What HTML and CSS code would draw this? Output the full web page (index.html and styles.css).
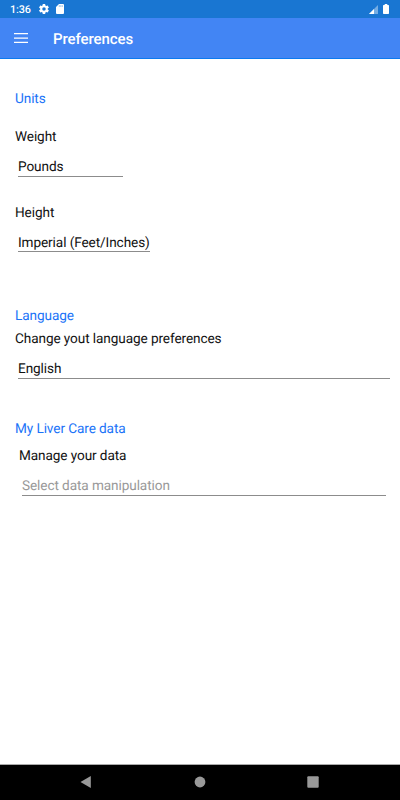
FILE: index.html
```html
<!DOCTYPE html>
<html lang="en">
<head>
<meta charset="utf-8">
<title>Preferences</title>
<link rel="stylesheet" href="styles.css">
</head>
<body>
<div class="status">
  <span class="time">1:36</span>
  <svg class="gear" width="12" height="12" viewBox="2 2 20 20"><path fill="#fff" fill-rule="evenodd" d="M19.4 13a7.500 7.500 0 0 0 0-2l2.100-1.600c.2-.2.200-.4.100-.6l-2-3.500c-.1-.2-.4-.3-.6-.2l-2.500 1a7 7 0 0 0-1.700-1l-.4-2.700a.5.5 0 0 0-.5-.4h-4a.5.5 0 0 0-.5.4L9 5.100a7 7 0 0 0-1.700 1l-2.500-1c-.2-.1-.5 0-.6.2l-2 3.500c-.1.2-.1.400.1.600L4.500 11a7.500 7.500 0 0 0 0 2l-2.200 1.600c-.2.2-.2.400-.1.600l2 3.500c.1.200.4.300.6.200l2.500-1a7 7 0 0 0 1.700 1l.4 2.700c0 .2.200.4.500.4h4c.2 0 .5-.2.500-.4l.4-2.700a7 7 0 0 0 1.700-1l2.500 1c.2.100.5 0 .6-.2l2-3.500c.1-.2.100-.4-.1-.6zM12 15.500a3.500 3.500 0 1 1 0-7 3.500 3.500 0 0 1 0 7z"/></svg>
  <svg class="card" width="8" height="10" viewBox="0 0 8 10"><path fill="#fff" d="M3 0h4a1 1 0 0 1 1 1v8a1 1 0 0 1-1 1H1a1 1 0 0 1-1-1V3z"/><path stroke="#1976d2" stroke-width=".5" d="M3.300 1.300v1.500M4.800 1.300v1.500M6.300 1.300v1.500"/></svg>
  <svg class="signal" width="9" height="9" viewBox="0 0 9 9"><path fill="#75ade4" d="M9 0v9H0z"/><path fill="#fff" d="M5 4v5H0z"/></svg>
  <svg class="battery" width="6" height="10" viewBox="0 0 6 10"><path fill="#fff" d="M1.700 0h2.600v1H5.300q.7 0 .7.700v7.600q0 .7-.7.700H.7q-.7 0-.7-.7V1.700Q0 1 .7 1h1z"/></svg>
</div>
<header class="bar">
  <svg class="menu" width="14" height="10" viewBox="0 0 14 10"><path stroke="#fff" stroke-width="1.300" d="M0 .7h14M0 5.200h14M0 9.300h14"/></svg>
  <h1>Preferences</h1>
</header>
<main>
  <section class="units">
    <h2>Units</h2>
    <p class="label weight">Weight</p>
    <div class="field pounds">Pounds</div>
    <p class="label height">Height</p>
    <div class="field imperial">Imperial (Feet/Inches)</div>
  </section>
  <section class="language">
    <h2>Language</h2>
    <p class="label">Change yout language preferences</p>
    <div class="field english">English</div>
  </section>
  <section class="data">
    <h2>My Liver Care data</h2>
    <p class="label">Manage your data</p>
    <div class="field empty">Select data manipulation</div>
  </section>
</main>
<nav class="nav">
  <svg width="12" height="14" viewBox="0 0 12 14"><path fill="#999" d="M10.800 1v12L.5 7z"/></svg>
  <svg width="12" height="12" viewBox="0 0 12 12"><circle cx="6" cy="6" r="5.400" fill="#999"/></svg>
  <svg width="12" height="12" viewBox="0 0 12 12"><rect x=".3" y=".3" width="11.400" height="11.400" rx="1" fill="#999"/></svg>
</nav>
</body>
</html>
```

FILE: styles.css
```css
* { box-sizing: border-box; margin: 0; padding: 0; }
body {
  width: 400px;
  height: 800px;
  display: flex;
  flex-direction: column;
  background: #fff;
  color: #111;
  font: 13.6px/20px Roboto, sans-serif;
  letter-spacing: -.09px;
  text-rendering: geometricPrecision;
  overflow: hidden;
}
svg { display: block; flex: none; }
.status {
  height: 18px;
  flex: none;
  display: flex;
  align-items: center;
  background: #1976d2;
  padding: 0 11px 0 10px;
}
.time { width: 28px; padding-top: 1px; color: #fff; font-size: 10.8px; font-weight: 500; line-height: 17px; }
.gear { width: 10px; height: 10px; margin-left: 1px; }
.card { margin-left: 7px; }
.signal { margin-left: auto; }
.battery { margin-left: 5px; }
.bar {
  height: 41px;
  flex: none;
  display: flex;
  align-items: center;
  background: #4285f4;
  border-bottom: 1px solid #0b7af0;
  padding-left: 14px;
}
h1 { margin-left: 25px; padding-top: 2px; color: #fff; font-size: 15px; font-weight: 500; }
main { flex: 1; padding: 30px 10px 0 15px; }
h2 { color: #1a73f8; font-size: inherit; font-weight: 400; }
.field { height: 20px; margin-left: 3px; border-bottom: 1px solid #8c8c8c; white-space: nowrap; }
.weight { margin-top: 18px; }
.pounds { width: 105px; margin-top: 10px; }
.height { margin-top: 26px; }
.imperial { width: 132px; height: 19px; margin-top: 10px; }
.language { margin-top: 54px; }
.language .label { margin-top: 3px; }
.english { margin-top: 10px; }
.data { margin-top: 40px; }
.data .label { margin: 7px 0 0 4px; }
.empty { margin: 10px 4px 0 7px; color: #999; }
.nav {
  height: 36px;
  flex: none;
  display: flex;
  align-items: center;
  justify-content: space-between;
  background: #000;
  border-top: 1px solid #aaa;
  padding: 0 81px 2px 80px;
}
```
